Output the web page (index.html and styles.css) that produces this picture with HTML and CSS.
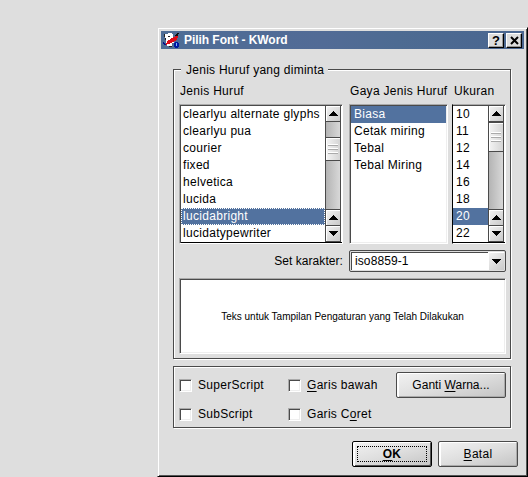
FILE: index.html
```html
<!DOCTYPE html>
<html lang="id">
<head>
<meta charset="utf-8">
<title>Pilih Font - KWord</title>
<link rel="stylesheet" href="styles.css">
</head>
<body>
<svg width="0" height="0" class="defs">
  <symbol id="up" viewBox="0 0 9 5"><path d="M4 0h1v1h1v1h1v1h1v1h1v1H0V4h1V3h1V2h1V1h1z"/></symbol>
  <symbol id="down" viewBox="0 0 9 5"><path d="M0 0h9v1H8v1H7v1H6v1H5v1H4V4H3V3H2V2H1V1H0z"/></symbol>
</svg>
<main class="window">
  <header class="title">
    <svg class="logo" width="17" height="16" viewBox="0 0 17 16" shape-rendering="crispEdges">
      <path d="M2 2h3V1h4v1h1v3h1v6H9v3H4v-3H3V6H2z" fill="#fff"/>
      <path d="M1 2h1v3H1zM2 6h1v2H2zM5 4h2v1H5zM6 14h3v1H6z" fill="#222"/>
      <path d="M12 3h1V2h1V1h2v1h-1v2h-1v1h-2z" fill="#111"/>
      <path d="M12 4h3v2h-1v2h-1v1h-2v1H9v1H7v1H4v1H1v-1h2v-1h1V9h1V8h2V7h1V6h2V5h2z" fill="#e00c18"/>
      <path d="M0 10h1v1h1v1h1v1H1v-1H0z" fill="#06108c"/>
      <path d="M12 10h3v1h1v4h-1v1h-3v-1h-1v-4h1z" fill="#0018a0"/>
      <path d="M13 11h1v3h-1z" fill="#7ab0ff"/>
    </svg>
    <h1>Pilih Font - KWord</h1>
    <button class="tbtn">?</button>
    <button class="tbtn"><svg width="9" height="9" viewBox="0 0 9 9"><path d="M1 1l7 7M8 1L1 8" stroke="#000" stroke-width="2"/></svg></button>
  </header>

  <fieldset class="group">
    <legend>Jenis Huruf yang diminta</legend>
    <div class="lists">
      <section class="col family">
        <h2>Jenis Huruf</h2>
        <div class="list">
          <ul>
            <li>clearlyu alternate glyphs</li><li>clearlyu pua</li><li>courier</li><li>fixed</li><li>helvetica</li><li>lucida</li><li class="sel focus">lucidabright</li><li>lucidatypewriter</li>
          </ul>
          <div class="scroll">
            <i class="sb"><svg><use href="#up"/></svg></i>
            <i class="thumb"><b></b><b></b><b></b></i>
            <i class="sb low"><svg><use href="#up"/></svg></i>
            <i class="sb"><svg><use href="#down"/></svg></i>
          </div>
        </div>
      </section>
      <section class="col style">
        <h2>Gaya Jenis Huruf</h2>
        <div class="list">
          <ul><li class="sel">Biasa</li><li>Cetak miring</li><li>Tebal</li><li>Tebal Miring</li></ul>
        </div>
      </section>
      <section class="col size">
        <h2>Ukuran</h2>
        <div class="list">
          <ul><li>10</li><li>11</li><li>12</li><li>14</li><li>16</li><li>18</li><li class="sel">20</li><li>22</li></ul>
          <div class="scroll">
            <i class="sb"><svg><use href="#up"/></svg></i>
            <i class="thumb"><b></b><b></b><b></b></i>
            <i class="sb low"><svg><use href="#up"/></svg></i>
            <i class="sb"><svg><use href="#down"/></svg></i>
          </div>
        </div>
      </section>
    </div>
    <div class="charset">
      <label>Set karakter:</label>
      <div class="combo"><span>iso8859-1</span><i><svg><use href="#down"/></svg></i></div>
    </div>
    <div class="preview">Teks untuk Tampilan Pengaturan yang Telah Dilakukan</div>
  </fieldset>

  <section class="effects">
    <div class="check"><i></i><span>SuperScript</span></div>
    <div class="check"><i></i><span><u>G</u>aris bawah</span></div>
    <button class="btn color">Ganti <u>W</u>arna...</button>
    <div class="check"><i></i><span>SubScript</span></div>
    <div class="check"><i></i><span>Garis C<u>o</u>ret</span></div>
  </section>

  <footer>
    <button class="btn ok"><span><u>O</u>K</span></button>
    <button class="btn"><u>B</u>atal</button>
  </footer>
</main>
</body>
</html>
```
FILE: styles.css
```css
* { box-sizing: border-box; margin: 0; padding: 0; }
body {
  width: 528px; height: 477px; overflow: hidden; background: #dedede;
  padding: 27px 0 0 157px; color: #000;
  font: 12px/17px "Liberation Sans", Arial, sans-serif; letter-spacing: .3px;
}
.defs { position: absolute; }
i { font-style: normal; display: block; }
u { text-underline-offset: 2px; text-decoration-thickness: 1px; }
h1, h2 { font-size: 12px; }
h2 { font-weight: 400; height: 22px; line-height: 18px; white-space: nowrap; padding-left: 1px; }
ul { list-style: none; }
button { font: inherit; letter-spacing: inherit; color: #000; }

.window {
  width: 371px; height: 450px; background: #dedede; padding: 2px 0 0 2px;
  border: 1px solid #000; border-top-color: #dedede; border-left-color: #dedede;
  box-shadow: inset 1px 1px #fff, inset -1px -1px #555;
}
.title {
  display: flex; align-items: center; width: 363px; height: 18px; margin: 1px 0 0 1px;
  background: linear-gradient(90deg, #4e6d96, #526b96 45%, #4d6b92 65%, #4a6690);
}
.logo { margin: 0 4px 0 2px; }
.title h1 { flex: 1; color: #fff; line-height: 18px; letter-spacing: -.05px; }
.tbtn {
  width: 16px; height: 15px; margin-right: 2px; line-height: 11px; font-weight: 700; font-size: 13px;
  border: 1px solid; border-color: #fff #000 #000 #fff; background: #dedede;
  box-shadow: inset -1px -1px #999; display: flex; align-items: center; justify-content: center;
}

.group, .effects {
  width: 338px; min-width: 0; border: 1px solid #4a4a4a; margin-left: 13px;
  box-shadow: 1px 1px #fff, inset 1px 1px #fff;
}
.group { position: relative; height: 290px; margin-top: 20px; padding: 12px 5px 0; }
.group legend {
  position: absolute; top: -9px; left: 7px; padding: 0 4px 0 5px; height: 18px; line-height: 18px;
  background: #dedede; letter-spacing: .26px; white-space: nowrap;
}
.lists { display: grid; grid-template-columns: 164px 99px 52px; column-gap: 6px; }
.lists .size { margin-left: -2px; }
.size h2 { padding-left: 2px; }
.list {
  display: flex; height: 140px; background: #fff; border: 1px solid;
  border-color: #aaa #fff #fff #aaa; box-shadow: inset 1px 1px #4a4a4a, inset -1px -1px #eee;
  padding: 1px;
}
.family .list { box-shadow: inset 1px 1px #4a4a4a, inset 0 -1px #000; }
.list ul { flex: 1; min-width: 0; }
.list li { height: 17px; line-height: 17px; padding-left: 2px; white-space: nowrap; }
.style .list li { padding-left: 3px; }
.size .list { border-left-color: #000; padding-left: 0; box-shadow: inset 0 1px #4a4a4a, inset 0 -1px #000; }
.size .list li { padding-left: 3px; }
.list .sel { background: #52729f; color: #fff; }
.sel.focus { outline: 1px dotted #fff; outline-offset: -1px; }
.scroll {
  width: 16px; height: 136px; display: flex; flex-direction: column; flex: none;
  background: linear-gradient(90deg, #b4b4b4, #d8d8d8); border: solid #4a4a4a; border-width: 0 1px;
}
.scroll > i, .combo i {
  display: flex; align-items: center; justify-content: center;
  background: linear-gradient(135deg, #f4f4f4, #c9c9c9); box-shadow: inset 1px 1px #fff;
}
.scroll svg, .combo svg { width: 9px; height: 5px; }
.scroll .sb { height: 16px; flex: none; border-bottom: 1px solid #4a4a4a; }
.scroll .low { margin-top: auto; border-top: 1px solid #4a4a4a; height: 17px; }
.scroll .thumb {
  height: 24px; margin-top: 15px; flex-direction: column; gap: 2px;
  border: solid #4a4a4a; border-width: 1px 0; background: linear-gradient(90deg, #f4f4f4, #d5d5d5);
}
.size .thumb { height: 30px; margin-top: 0; }
.thumb b { width: 10px; height: 2px; background: #fff; border-bottom: 1px solid #aaa; }

.charset { display: flex; justify-content: flex-end; gap: 6px; align-items: center; height: 22px; margin: 6px 0 0; width: 327px; }
.charset label { letter-spacing: .06px; }
.combo {
  width: 157px; height: 22px; border: 1px solid #4a4a4a; border-radius: 2px;
  padding: 1px; display: flex; background: #dedede;
}
.combo span { flex: 1; background: #fff; border: solid #4a4a4a; border-width: 1px 0 0 1px; padding-left: 3px; line-height: 17px; letter-spacing: .1px; }
.combo i { width: 16px; }
.preview {
  width: 327px; height: 76px; margin-top: 6px; background: #fff; border: 1px solid;
  border-color: #aaa #fff #fff #aaa; box-shadow: inset 1px 1px #4a4a4a, inset -1px -1px #eee;
  font-size: 10px; line-height: 75px; text-align: center; letter-spacing: 0; white-space: nowrap;
}

.effects {
  height: 62px; margin-top: 7px; padding: 5px 4px 0 5px;
  display: grid; grid-template-columns: 109px 108px 110px; grid-template-rows: 26px 29px;
}
.check { display: flex; align-items: center; gap: 6px; white-space: nowrap; }
.check:nth-child(n+4) { padding-top: 3px; }
.check i {
  width: 13px; height: 13px; background: #fff; border: 1px solid; border-color: #aaa #fff #fff #aaa;
  box-shadow: inset 1px 1px #4a4a4a, inset -1px -1px #eee;
}
.btn {
  width: 110px; height: 26px; border: 1px solid #4a4a4a; border-radius: 2px;
  background: linear-gradient(165deg, #f2f2f2, #dedede 50%, #c4c4c4);
  box-shadow: inset 2px 1px #fff, inset -1px -1px #aaa; white-space: nowrap;
}
.color { letter-spacing: .03px; }
footer { display: flex; justify-content: flex-end; gap: 6px; margin: 13px 9px 0 0; }
footer .btn { width: 80px; }
.ok { border-color: #000; box-shadow: inset 2px 1px #fff, inset -1px -1px #555; padding: 4px; font-weight: 700; }
.ok span { display: block; height: 16px; line-height: 15px; border: 1px dotted #000; }
```
